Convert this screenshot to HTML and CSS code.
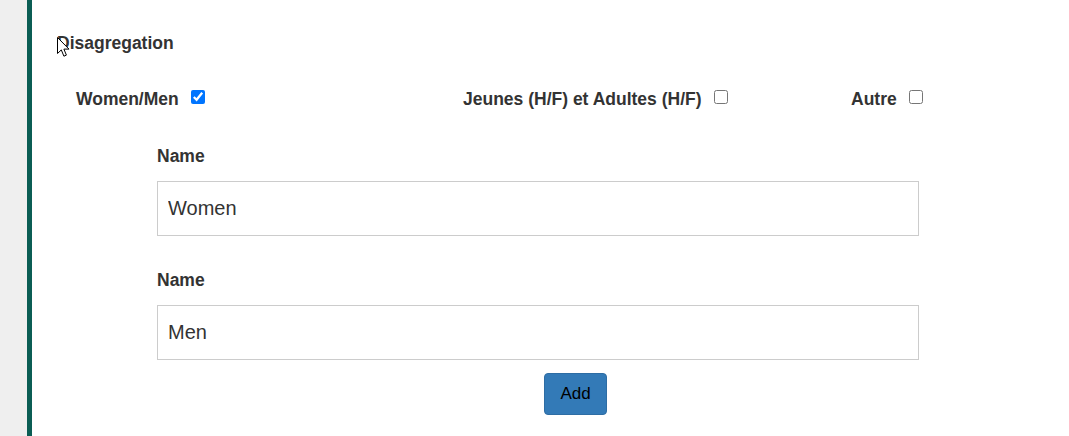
FILE: index.html
```html
<!DOCTYPE html>
<html>
<head>
<meta charset="utf-8">
<link rel="stylesheet" href="styles.css">
</head>
<body>
<div class="page">
  <div class="gutter"></div>
  <div class="accent"></div>
  <div class="content">
    <h4 class="title">Disagregation</h4>
    <div class="options">
      <label class="opt">Women/Men<input type="checkbox" checked></label>
      <label class="opt">Jeunes (H/F) et Adultes (H/F)<input type="checkbox"></label>
      <label class="opt">Autre<input type="checkbox"></label>
    </div>
    <div class="fields">
      <div class="field">
        <label class="field-label">Name</label>
        <input class="field-input" type="text" value="Women">
      </div>
      <div class="field">
        <label class="field-label">Name</label>
        <input class="field-input" type="text" value="Men">
      </div>
      <button class="btn-add">Add</button>
    </div>
  </div>
</div>
<svg class="cursor" width="13" height="21" viewBox="0 0 13 21">
  <path d="M0.5 0.5 L0.5 16.5 L4.3 12.9 L6.9 19.2 L9.4 18.1 L6.9 12.1 L12 12.1 Z" fill="#fff" stroke="#000" stroke-width="1" stroke-linejoin="miter"/>
</svg>
</body>
</html>
```

FILE: styles.css
```css
html, body {
  margin: 0;
  padding: 0;
  background: #fff;
}
body {
  font-family: "Liberation Sans", Arial, sans-serif;
  color: #333;
  width: 1069px;
  height: 436px;
  overflow: hidden;
  position: relative;
}
.page {
  display: flex;
  height: 436px;
}
.gutter {
  width: 27px;
  background: #efefef;
  flex: none;
}
.accent {
  width: 5px;
  background: #0b5d54;
  flex: none;
}
.content {
  flex: 1;
  padding: 33px 0 0 25px;
}
.title {
  margin: 0;
  font-size: 17.5px;
  line-height: 20px;
  font-weight: bold;
}
.options {
  display: grid;
  grid-template-columns: 387px 388px 200px;
  margin: 36px 0 0 19px;
}
.opt {
  display: flex;
  align-items: center;
  font-size: 17.5px;
  line-height: 20px;
  font-weight: bold;
  white-space: pre;
}
.opt input {
  width: 14px;
  height: 14px;
  margin: 0 0 0 12px;
  position: relative;
  top: -2px;
}
.fields {
  margin: 37px 0 0 100px;
  width: 762px;
  display: flex;
  flex-direction: column;
}
.field {
  display: flex;
  flex-direction: column;
  margin-bottom: 34px;
}
.field:nth-of-type(2) {
  margin-bottom: 13px;
}
.field-label {
  font-size: 17.5px;
  line-height: 20px;
  font-weight: bold;
  margin-bottom: 15px;
}
.field-input {
  box-sizing: border-box;
  width: 762px;
  height: 55px;
  border: 1px solid #cccccc;
  border-radius: 0;
  padding: 0 10px;
  font-family: "Liberation Sans", Arial, sans-serif;
  font-size: 20px;
  color: #333;
  outline: none;
}
.btn-add {
  align-self: flex-start;
  margin-left: 387px;
  width: 63px;
  height: 42px;
  background: #337ab7;
  border: 1px solid #2e6da4;
  border-radius: 4px;
  color: #000;
  font-family: "Liberation Sans", Arial, sans-serif;
  font-size: 17px;
  padding: 0;
}
.cursor {
  position: absolute;
  left: 57px;
  top: 37px;
}
```
